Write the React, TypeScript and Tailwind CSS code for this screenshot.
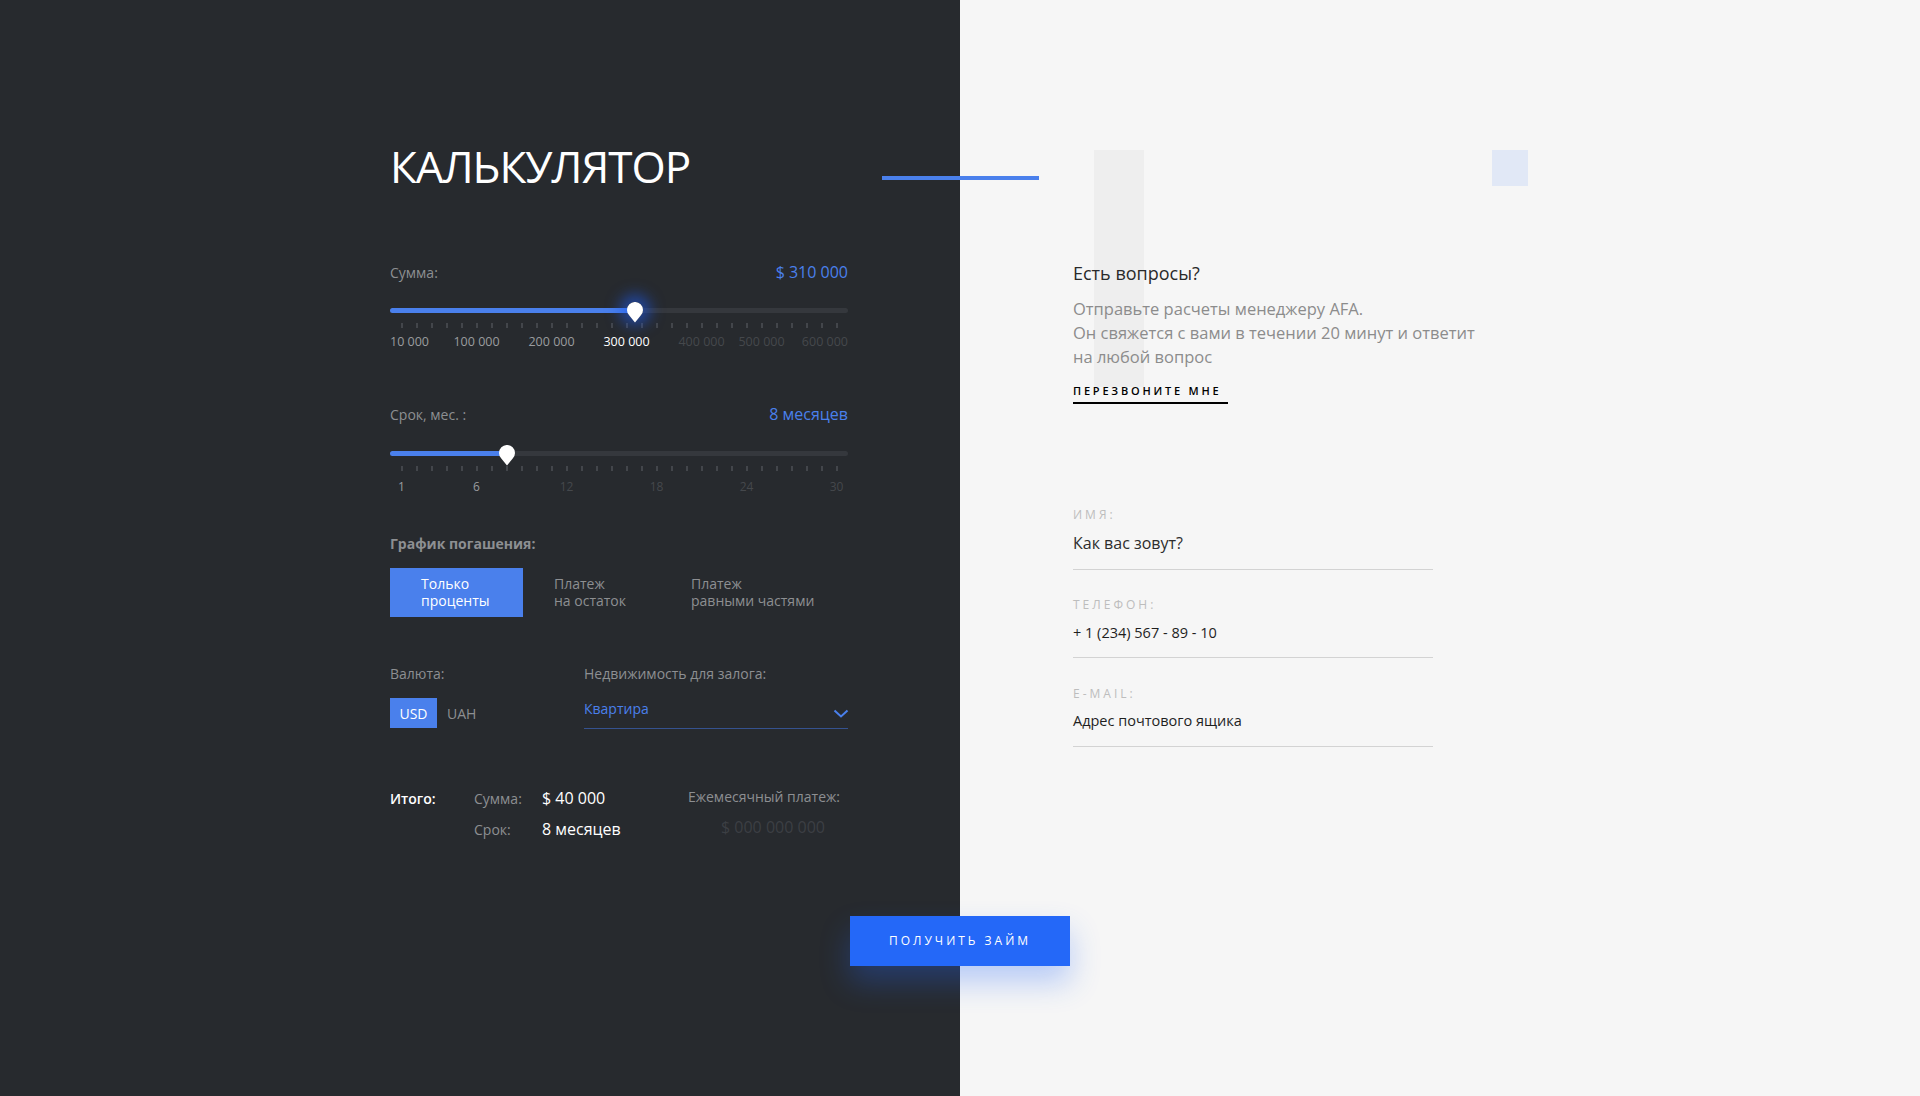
import React from "react";

type Tone = "on" | "mid" | "off";

const toneClass: Record<Tone, string> = {
  on: "text-white",
  mid: "text-[#9a9c9f]",
  off: "text-[#45484c]",
};

// labels are pinned to tick columns (first/last hug the track ends)
const sumLabels: { text: string; tone: Tone; cell: string }[] = [
  { text: "10 000", tone: "mid", cell: "col-start-1 col-end-4 justify-start -ml-[4px]" },
  { text: "100 000", tone: "mid", cell: "col-start-6 justify-center" },
  { text: "200 000", tone: "mid", cell: "col-start-11 justify-center" },
  { text: "300 000", tone: "on", cell: "col-start-16 justify-center" },
  { text: "400 000", tone: "off", cell: "col-start-21 justify-center" },
  { text: "500 000", tone: "off", cell: "col-start-25 justify-center" },
  { text: "600 000", tone: "off", cell: "col-start-28 col-end-31 justify-end -mr-[4px]" },
];

const monthLabels: { text: string; tone: Tone; col: string }[] = [
  { text: "1", tone: "mid", col: "col-start-1" },
  { text: "6", tone: "mid", col: "col-start-6" },
  { text: "12", tone: "off", col: "col-start-12" },
  { text: "18", tone: "off", col: "col-start-18" },
  { text: "24", tone: "off", col: "col-start-24" },
  { text: "30", tone: "off", col: "col-start-30" },
];

const Ticks: React.FC<{ className?: string }> = ({ className = "" }) => (
  <div className={`ml-[4px] grid grid-cols-[repeat(30,15px)] ${className}`}>
    {Array.from({ length: 30 }).map((_, i) => (
      <div key={i} className="flex justify-center">
        <span className="block w-[2px] h-[5px] bg-[#43464b]" />
      </div>
    ))}
  </div>
);

const Thumb: React.FC<{ glow?: boolean }> = ({ glow }) => (
  <div className="relative w-[16px] h-[21px]">
    {glow && (
      <div className="absolute left-0 top-0 w-[16px] h-[16px] rounded-full shadow-[0_0_14px_8px_rgba(30,90,235,0.55)]" />
    )}
    <svg className="relative" width="16" height="21" viewBox="0 0 16 21">
      <path d="M8 20.5 L2.3 13.6 A8 8 0 1 1 13.7 13.6 Z" fill="#ffffff" />
    </svg>
  </div>
);

const Track: React.FC<{ fill: string; thumb: string; glow?: boolean; className?: string }> = ({
  fill,
  thumb,
  glow,
  className = "",
}) => (
  <div className={`relative h-[5px] rounded-full bg-[#35383d] ${className}`}>
    <div className={`h-full rounded-full bg-[#4a80ec] ${fill}`} />
    <div className={`absolute top-[-6px] ${thumb}`}>
      <Thumb glow={glow} />
    </div>
  </div>
);

const Field: React.FC<{ label: string; value: string; big?: boolean; className?: string; valueBox: string }> = ({
  label,
  value,
  big,
  className = "",
  valueBox,
}) => (
  <div className={`w-[360px] ${className}`}>
    <div className="text-[12px] leading-[14px] tracking-[3px] text-[#bdbdbd]">{label}</div>
    <div
      className={
        big
          ? `${valueBox} border-b border-[#d3d3d3] text-[16px] leading-[24px] text-[#2d2d2d]`
          : `${valueBox} border-b border-[#d3d3d3] text-[14.5px] leading-[20px] text-[#1f1f1f]`
      }
    >
      {value}
    </div>
  </div>
);

export default function App() {
  return (
    <div className="relative flex h-[1096px] w-full overflow-hidden font-['Open_Sans',sans-serif]">
      {/* calculator */}
      <div className="w-[960px] shrink-0 bg-[#272a2e] pl-[390px] pr-[112px] pt-[143px]">
        <h1 className="text-[44px] leading-[46px] font-normal tracking-[-1px] text-white">КАЛЬКУЛЯТОР</h1>

        {/* sum */}
        <div className="mt-[73px] flex items-center justify-between h-[20px]">
          <span className="text-[14px] text-[#8d8f92]">Сумма:</span>
          <span className="text-[16px] text-[#4a80ec]">$ 310 000</span>
        </div>
        <Track className="mt-[26px]" fill="w-[245px]" thumb="left-[237px]" glow />
        <Ticks className="mt-[10px]" />
        <div className="mt-[6px] ml-[4px] grid grid-cols-[repeat(30,15px)] text-[12.5px] leading-[16px]">
          {sumLabels.map((l) => (
            <div key={l.text} className={`flex row-start-1 ${l.cell}`}>
              <span className={`whitespace-nowrap ${toneClass[l.tone]}`}>{l.text}</span>
            </div>
          ))}
        </div>

        {/* term */}
        <div className="mt-[54px] flex items-center justify-between h-[20px]">
          <span className="text-[14px] text-[#8d8f92]">Срок, мес. :</span>
          <span className="text-[16px] text-[#4a80ec]">8 месяцев</span>
        </div>
        <Track className="mt-[27px]" fill="w-[117px]" thumb="left-[109px]" />
        <Ticks className="mt-[10px]" />
        <div className="mt-[8px] ml-[4px] grid grid-cols-[repeat(30,15px)] text-[12px] leading-[16px]">
          {monthLabels.map((l) => (
            <div key={l.text} className={`flex justify-center row-start-1 ${l.col}`}>
              <span className={`whitespace-nowrap ${toneClass[l.tone]}`}>{l.text}</span>
            </div>
          ))}
        </div>

        {/* schedule */}
        <div className="mt-[38px] h-[20px] flex items-center text-[14px] font-bold text-[#8d8f92]">
          График погашения:
        </div>
        <div className="mt-[15px] flex text-[14px] leading-[17px]">
          <div className="w-[133px] h-[49px] pl-[31px] pb-[2px] flex items-center bg-[#4a80ec] text-white">
            Только
            <br />
            проценты
          </div>
          <div className="w-[168px] h-[49px] pl-[31px] pb-[2px] flex items-center text-[#8d8f92]">
            Платеж
            <br />
            на остаток
          </div>
          <div className="h-[49px] pb-[2px] flex items-center text-[#8d8f92]">
            Платеж
            <br />
            равными частями
          </div>
        </div>

        {/* currency + property */}
        <div className="mt-[46px] grid grid-cols-[194px_1fr]">
          <div>
            <div className="h-[20px] flex items-center text-[14px] text-[#8d8f92]">Валюта:</div>
            <div className="mt-[15px] flex items-center text-[14px]">
              <span className="w-[47px] h-[30px] flex items-center justify-center bg-[#4a80ec] text-white">USD</span>
              <span className="ml-[10px] text-[#8d8f92]">UAH</span>
            </div>
          </div>
          <div>
            <div className="h-[20px] flex items-center text-[14px] text-[#8d8f92]">Недвижимость для залога:</div>
            <div className="mt-[14px] h-[32px] pt-[3px] flex items-start justify-between border-b border-[#35528f]">
              <span className="text-[14px] leading-[18px] text-[#4a80ec]">Квартира</span>
              <svg className="mt-[9px] mr-[-1px]" width="16" height="9" viewBox="0 0 16 9" fill="none">
                <path d="M1.5 1.5 L8 7.5 L14.5 1.5" stroke="#4a80ec" strokeWidth="2" />
              </svg>
            </div>
          </div>
        </div>

        {/* totals */}
        <div className="mt-[59px] flex">
          <div className="w-[84px] h-[20px] flex items-center text-[14px] font-semibold text-white">Итого:</div>
          <div className="w-[68px] flex flex-col gap-[11px] text-[14px] text-[#8d8f92]">
            <span className="h-[20px] flex items-center">Сумма:</span>
            <span className="h-[20px] flex items-center">Срок:</span>
          </div>
          <div className="flex flex-col gap-[11px] text-[16px] text-white">
            <span className="h-[20px] flex items-center">$ 40 000</span>
            <span className="h-[20px] flex items-center">8 месяцев</span>
          </div>
          <div className="ml-auto mr-[8px] mt-[-2px] flex flex-col items-center gap-[11px]">
            <span className="h-[20px] flex items-center text-[14px] text-[#8d8f92]">Ежемесячный платеж:</span>
            <span className="h-[20px] pl-[18px] flex items-center text-[16px] text-[#3c3f44]">$ 000 000 000</span>
          </div>
        </div>
      </div>

      {/* contact */}
      <div className="relative flex-1 bg-[#f6f6f6] pl-[113px] pt-[261px]">
        <div className="absolute left-[134px] top-[150px] w-[50px] h-[237px] bg-[#eeeeee]" />
        <div className="absolute left-[532px] top-[150px] w-[36px] h-[36px] bg-[#e1e8f6]" />

        <div className="relative">
          <h2 className="text-[18px] leading-[24px] text-[#2a2a2a]">Есть вопросы?</h2>
          <p className="mt-[12px] text-[16.5px] leading-[24px] text-[#8c8c8c]">
            Отправьте расчеты менеджеру AFA.
            <br />
            Он свяжется с вами в течении 20 минут и ответит
            <br />
            на любой вопрос
          </p>
          <div className="mt-[15px] inline-block pb-[4px] pr-[6px] border-b-2 border-black text-[11px] leading-[14px] font-semibold tracking-[2.8px] text-black">
            ПЕРЕЗВОНИТЕ МНЕ
          </div>

          <Field className="mt-[104px]" label="ИМЯ:" value="Как вас зовут?" big valueBox="mt-[9px] pb-[14px]" />
          <Field className="mt-[28px]" label="ТЕЛЕФОН:" value="+ 1 (234) 567 - 89 - 10" valueBox="mt-[11px] pb-[14px]" />
          <Field className="mt-[29px]" label="E-MAIL:" value="Адрес почтового ящика" valueBox="mt-[10px] pb-[15px]" />
        </div>
      </div>

      {/* overlays crossing both panels */}
      <div className="absolute left-[882px] top-[176px] w-[157px] h-[4px] bg-[#4a80ec]" />
      <button className="absolute left-[850px] top-[916px] w-[220px] h-[50px] bg-[#2468f8] text-white text-[12px] font-normal tracking-[3px] shadow-[0_16px_30px_rgba(36,104,248,0.3)]">
        ПОЛУЧИТЬ ЗАЙМ
      </button>
    </div>
  );
}
